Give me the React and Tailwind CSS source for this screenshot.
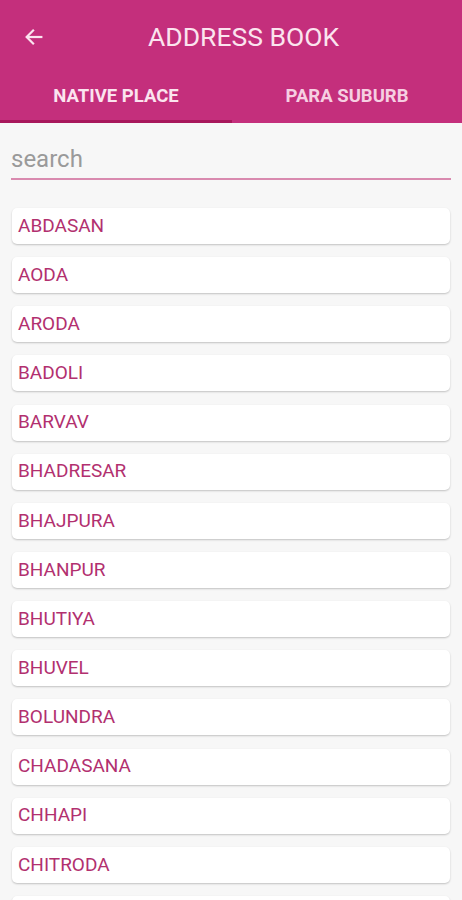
import React from "react";

const places = [
  "ABDASAN",
  "AODA",
  "ARODA",
  "BADOLI",
  "BARVAV",
  "BHADRESAR",
  "BHAJPURA",
  "BHANPUR",
  "BHUTIYA",
  "BHUVEL",
  "BOLUNDRA",
  "CHADASANA",
  "CHHAPI",
  "CHITRODA",
];

const App = () => {
  return (
    <div
      className="h-[900px] w-[462px] overflow-hidden bg-[#f7f7f7]"
      style={{ fontFamily: "Roboto, 'Liberation Sans', sans-serif" }}
    >
      {/* Toolbar */}
      <div className="flex h-[68px] items-center bg-[#c42f7c] pt-[5px] shadow-[0_1px_1px_rgba(0,0,0,0.08)]">
        <button className="ml-[22px] flex h-6 w-6 items-center justify-center text-[#fbe4ef]">
          <svg width="22" height="22" viewBox="0 0 24 24" fill="none" stroke="currentColor" strokeWidth="2.4" strokeLinecap="square">
            <path d="M20 12H5" />
            <path d="M11 5l-7 7 7 7" />
          </svg>
        </button>
        <h1 className="ml-[102px] text-[26.5px] font-normal text-[#fbe4ef]">
          ADDRESS BOOK
        </h1>
      </div>

      {/* Tabs */}
      <div className="relative flex h-[55px] bg-[#c42f7c]">
        <div className="flex w-[232px] items-center justify-center pt-[3px] text-[18.5px] font-bold text-[#fbe4ef]">
          NATIVE PLACE
        </div>
        <div className="flex flex-1 items-center justify-center pt-[3px] text-[18.5px] font-bold text-[#f6cfe2]">
          PARA SUBURB
        </div>
        <span className="absolute bottom-0 left-0 h-[3px] w-[232px] bg-[#a8185c]" />
      </div>

      {/* Search */}
      <div className="mx-[11px] mt-[18px] border-b-2 border-[#d98aaf] pb-[1px]">
        <input
          className="w-full bg-transparent text-[24px] text-[#333] outline-none placeholder:text-[#9a9a9a]"
          placeholder="search"
        />
      </div>

      {/* List */}
      <div className="mx-[12px] mt-[28px] flex flex-col gap-[13.15px]">
        {places.map((p) => (
          <div
            key={p}
            className="flex h-[36px] items-center rounded-[5px] bg-white pl-[6px] text-[19px] text-[#b2306f] shadow-[0_1px_2px_rgba(0,0,0,0.22)]"
          >
            {p}
          </div>
        ))}
        <div className="h-[36px] rounded-[5px] bg-white shadow-[0_1px_2px_rgba(0,0,0,0.22)]" />
      </div>
    </div>
  );
};

export default App;
